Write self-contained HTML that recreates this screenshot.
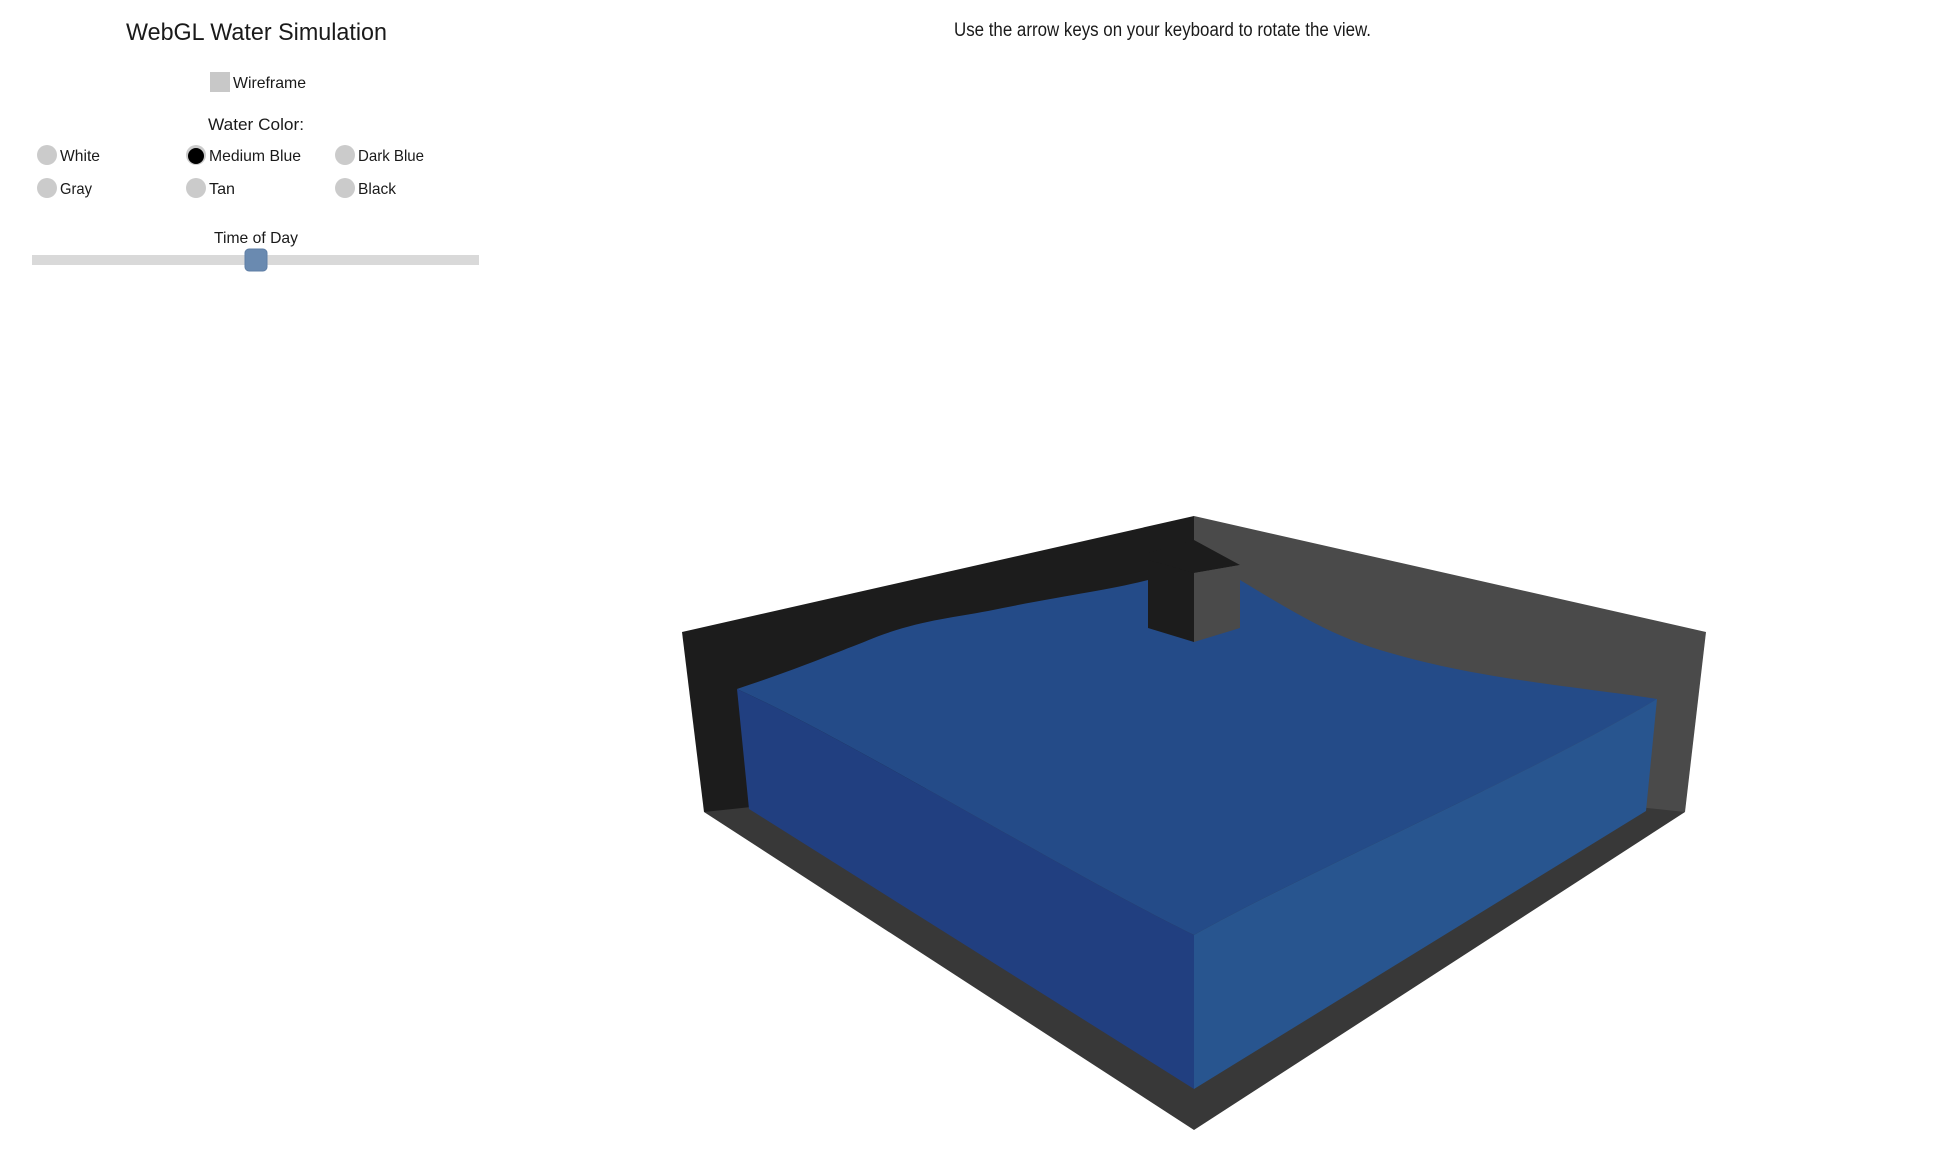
<!DOCTYPE html>
<html><head><meta charset="utf-8"><style>
html,body{margin:0;padding:0;background:#fff;width:1936px;height:1173px;overflow:hidden}
svg{display:block}
text{font-family:"Liberation Sans",sans-serif;fill:#1a1a1a}
</style></head><body>
<svg width="1936" height="1173" viewBox="0 0 1936 1173" xmlns="http://www.w3.org/2000/svg">
<rect width="1936" height="1173" fill="#fff"/>
<text x="126" y="40" font-size="24" textLength="261" lengthAdjust="spacingAndGlyphs">WebGL Water Simulation</text>
<rect x="210" y="72" width="20" height="20" fill="#c8c8c8"/>
<text x="233" y="88" font-size="16" textLength="73" lengthAdjust="spacingAndGlyphs">Wireframe</text>
<text x="208" y="130" font-size="17" textLength="96" lengthAdjust="spacingAndGlyphs">Water Color:</text>
<circle cx="47" cy="155" r="10" fill="#cbcbcb"/>
<text x="60" y="161" font-size="16" textLength="40" lengthAdjust="spacingAndGlyphs">White</text>
<circle cx="196" cy="155" r="10" fill="#cbcbcb"/><circle cx="196" cy="156" r="8" fill="#000"/>
<text x="209" y="161" font-size="16" textLength="92" lengthAdjust="spacingAndGlyphs">Medium Blue</text>
<circle cx="345" cy="155" r="10" fill="#cbcbcb"/>
<text x="358" y="161" font-size="16" textLength="66" lengthAdjust="spacingAndGlyphs">Dark Blue</text>
<circle cx="47" cy="188" r="10" fill="#cbcbcb"/>
<text x="60" y="194" font-size="16" textLength="32" lengthAdjust="spacingAndGlyphs">Gray</text>
<circle cx="196" cy="188" r="10" fill="#cbcbcb"/>
<text x="209" y="194" font-size="16" textLength="26" lengthAdjust="spacingAndGlyphs">Tan</text>
<circle cx="345" cy="188" r="10" fill="#cbcbcb"/>
<text x="358" y="194" font-size="16" textLength="38" lengthAdjust="spacingAndGlyphs">Black</text>
<text x="214" y="243" font-size="16" textLength="84" lengthAdjust="spacingAndGlyphs">Time of Day</text>
<rect x="32" y="255" width="447" height="10" fill="#d9d9d9"/>
<rect x="245" y="249" width="22" height="22" rx="4" fill="#6a8ab0" stroke="#5f7fa6" stroke-width="1"/>
<text x="954" y="36" font-size="19" textLength="417" lengthAdjust="spacingAndGlyphs">Use the arrow keys on your keyboard to rotate the view.</text>
<polygon points="704,812 1194,1130 1685,812 1194,560" fill="#383838"/>
<polygon points="682,632 1194,516 1194,760 704,812" fill="#1c1c1c"/>
<polygon points="1194,516 1706,632 1685,812 1194,760" fill="#4a4a4a"/>
<path d="M737,689 C800,668 830,655 864,642 C910,622 950,618 988,611 C1060,596 1110,590 1148,580 L1240,580 C1290,610 1330,635 1380,650 C1430,665 1470,672 1500,677 C1570,688 1620,693 1657,699 C1540,770 1310,870 1194,935 C1080,880 850,740 737,689 Z" fill="#244b88"/>
<path d="M737,689 C850,740 1080,880 1194,935 L1194,1089 L749,809 Z" fill="#213f80"/>
<path d="M1194,935 C1310,870 1540,770 1657,699 L1646,811 L1194,1089 Z" fill="#28558f"/>
<polygon points="1148,553 1194,540 1240,565 1194,573 1148,560" fill="#1c1c1c"/>
<polygon points="1148,560 1194,573 1194,642 1148,628" fill="#1c1c1c"/>
<polygon points="1194,573 1240,565 1240,628 1194,642" fill="#4a4a4a"/>
</svg>
</body></html>
